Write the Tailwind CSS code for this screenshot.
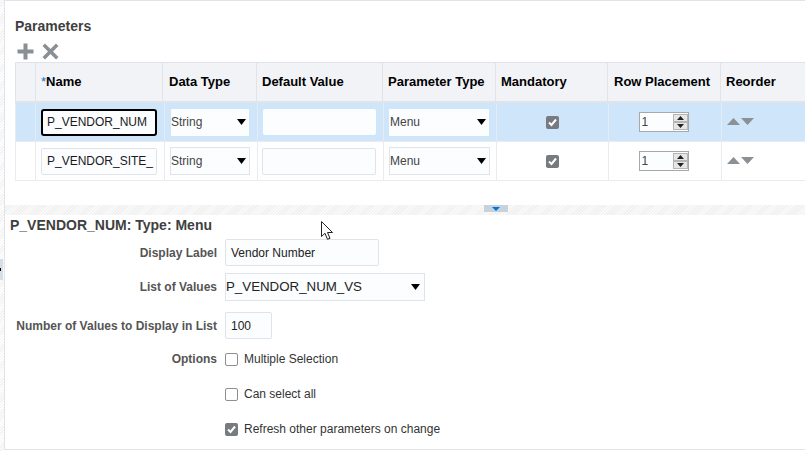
<!DOCTYPE html>
<html lang="en">
  <head>
    <meta charset="UTF-8" />
    <meta name="viewport" content="width=device-width, initial-scale=1.0" />
    <title>Parameters</title>
    <script src="https://cdn.jsdelivr.net/npm/@tailwindcss/browser@4"></script>
  </head>
  <body class="relative h-[451px] w-[805px] overflow-hidden bg-white font-['Liberation_Sans',Arial,sans-serif] text-xs text-[#1a1a1a]">
    <!-- left hatch strip -->
    <div class="absolute left-0 top-0 h-full w-[4px] bg-[repeating-linear-gradient(135deg,#f2f2f2_0,#f2f2f2_1px,#ffffff_1px,#ffffff_2px)]"></div>
    <div class="absolute left-0 top-[259px] h-[21px] w-[3px] bg-[#d6dfe6]"></div>
    <div class="absolute left-0 top-[268px] h-[3px] w-[1px] bg-black"></div>

    <div class="ml-[4px] h-[450px] w-[801px] border-l border-t border-b border-[#dfe4ea]">
      <!-- parameters section -->
      <div class="h-[204px] pl-[10px]">
        <h2 class="pt-[17px] text-sm leading-[16px] font-bold text-[#3f3f3f]">Parameters</h2>
        <div class="ml-[2px] mt-[1px] flex h-[27px] items-center gap-[8px] pt-[5px]">
          <svg width="17" height="17" viewBox="0 0 17 17"><path d="M6.500 0.500h4v6h6v4h-6v6h-4v-6h-6v-4h6z" fill="#8a8f94" /></svg>
          <svg width="17" height="17" viewBox="0 0 17 17"><path d="M3 0.500l5.500 5.500 5.500-5.500 2.500 2.500-5.500 5.500 5.500 5.500-2.500 2.500-5.500-5.500-5.500 5.500-2.500-2.500 5.500-5.500-5.500-5.500z" fill="#8a8f94" /></svg>
        </div>

        <div class="w-[790px] border-t border-[#dfe4ea]">
          <!-- header -->
          <div class="grid h-[40px] grid-cols-[21px_127px_94px_126px_113px_112px_113px_84px] items-center border-b-2 border-[#dfe4ea] bg-[#f1f3f7] text-[13px] font-bold text-black">
            <div class="h-full border-x border-[#dfe4ea]"></div>
            <div class="flex h-full items-center border-r border-[#dfe4ea] pl-[5px]"><span class="font-normal text-[#0572ce]">*</span>Name</div>
            <div class="flex h-full items-center border-r border-[#dfe4ea] pl-[6px]">Data Type</div>
            <div class="flex h-full items-center border-r border-[#dfe4ea] pl-[5px]">Default Value</div>
            <div class="flex h-full items-center border-r border-[#dfe4ea] pl-[5px]">Parameter Type</div>
            <div class="flex h-full items-center border-r border-[#dfe4ea] pl-[5px]">Mandatory</div>
            <div class="flex h-full items-center border-r border-[#dfe4ea] pl-[6px]">Row Placement</div>
            <div class="flex h-full items-center pl-[5px]">Reorder</div>
          </div>

          <!-- row 1 -->
          <div class="grid h-[39px] grid-cols-[21px_129px_93px_126px_113px_112px_113px_83px] items-center border-b border-[#e9ebee] bg-[#cfe6fa]">
            <div class="h-full border-x border-[#e4edf5]"></div>
            <div class="flex h-full items-center border-r border-[#e4edf5] pl-[5px]">
              <input value="P_VENDOR_NUM" class="h-[27px] w-[116px] rounded-[3px] border-2 border-black bg-[#fbfdff] pl-[4px] text-xs outline-none" />
            </div>
            <div class="flex h-full items-center border-r border-[#e4edf5] pl-[6px]">
              <div class="flex h-[27px] w-[78px] items-center justify-between bg-[#fbfdff] pr-[3px] text-[#444]">String
                <svg width="9" height="6" viewBox="0 0 9 6"><path d="M0 0h9l-4.500 6z" fill="#000" /></svg>
              </div>
            </div>
            <div class="flex h-full items-center border-r border-[#e4edf5] pl-[5px]">
              <div class="h-[26px] w-[113px] rounded-[2px] bg-[#fbfdff]"></div>
            </div>
            <div class="flex h-full items-center border-r border-[#e4edf5] pl-[5px]">
              <div class="flex h-[27px] w-[100px] items-center justify-between bg-[#fbfdff] pl-[1px] pr-[3px] text-[#444]">Menu
                <svg width="9" height="6" viewBox="0 0 9 6"><path d="M0 0h9l-4.500 6z" fill="#000" /></svg>
              </div>
            </div>
            <div class="flex h-full items-center justify-center border-r border-[#e4edf5]">
              <div class="flex h-[13px] w-[13px] items-center justify-center rounded-[2px] bg-[#777b7f]">
                <svg width="11" height="11" viewBox="0 0 11 11"><path d="M2 5.500l2.500 2.500 4.500-5.500" fill="none" stroke="#fff" stroke-width="2" /></svg>
              </div>
            </div>
            <div class="flex h-full items-center justify-center border-r border-[#e4edf5] pr-[3px]">
              <div class="flex h-[20px] w-[50px] items-center border border-[#a8a8a8] bg-[#fbfdff] pl-[2px] text-[#444]">
                <span class="flex-1">1</span>
                <span class="flex h-[16px] w-[15px] flex-col justify-between bg-[#b5b5b5] p-[1px]">
                  <span class="flex h-[6px] items-center justify-center bg-[#e6e6e6]"><svg width="7" height="4" viewBox="0 0 7 4"><path d="M3.500 0l3.500 4h-7z" fill="#222" /></svg></span>
                  <span class="flex h-[6px] items-center justify-center bg-[#e6e6e6]"><svg width="7" height="4" viewBox="0 0 7 4"><path d="M0 0h7l-3.500 4z" fill="#222" /></svg></span>
                </span>
              </div>
            </div>
            <div class="flex h-full items-center gap-[1px] pb-[2px] pl-[5px]">
              <svg width="13" height="7" viewBox="0 0 13 7"><path d="M6.500 0l6.500 7h-13z" fill="#8b9094" /></svg>
              <svg width="13" height="7" viewBox="0 0 13 7"><path d="M0 0h13l-6.500 7z" fill="#8b9094" /></svg>
            </div>
          </div>

          <!-- row 2 -->
          <div class="grid h-[39px] grid-cols-[21px_129px_93px_126px_113px_112px_113px_83px] items-center border-b border-[#e9ebee] bg-white">
            <div class="h-full border-x border-[#e9ebee]"></div>
            <div class="flex h-full items-center border-r border-[#e9ebee] pl-[5px]">
              <input value="P_VENDOR_SITE_" class="h-[27px] w-[116px] rounded-[2px] border border-[#dfe4ea] bg-[#fbfdff] pl-[5px] text-xs outline-none" />
            </div>
            <div class="flex h-full items-center border-r border-[#e9ebee] pl-[5px]">
              <div class="flex h-[28px] w-[80px] items-center justify-between border border-[#dfe4ea] bg-[#fbfdff] pr-[3px] text-[#444]">String
                <svg width="9" height="6" viewBox="0 0 9 6"><path d="M0 0h9l-4.500 6z" fill="#000" /></svg>
              </div>
            </div>
            <div class="flex h-full items-center border-r border-[#e9ebee] pl-[4px]">
              <div class="h-[27px] w-[114px] rounded-[2px] border border-[#dfe4ea] bg-[#fbfdff]"></div>
            </div>
            <div class="flex h-full items-center border-r border-[#e9ebee] pl-[5px]">
              <div class="flex h-[28px] w-[101px] items-center justify-between border border-[#dfe4ea] bg-[#fbfdff] pr-[3px] text-[#444]">Menu
                <svg width="9" height="6" viewBox="0 0 9 6"><path d="M0 0h9l-4.500 6z" fill="#000" /></svg>
              </div>
            </div>
            <div class="flex h-full items-center justify-center border-r border-[#e9ebee]">
              <div class="flex h-[13px] w-[13px] items-center justify-center rounded-[2px] bg-[#777b7f]">
                <svg width="11" height="11" viewBox="0 0 11 11"><path d="M2 5.500l2.500 2.500 4.500-5.500" fill="none" stroke="#fff" stroke-width="2" /></svg>
              </div>
            </div>
            <div class="flex h-full items-center justify-center border-r border-[#e9ebee] pr-[3px]">
              <div class="flex h-[20px] w-[50px] items-center border border-[#a8a8a8] bg-[#fbfdff] pl-[2px] text-[#444]">
                <span class="flex-1">1</span>
                <span class="flex h-[16px] w-[15px] flex-col justify-between bg-[#b5b5b5] p-[1px]">
                  <span class="flex h-[6px] items-center justify-center bg-[#e6e6e6]"><svg width="7" height="4" viewBox="0 0 7 4"><path d="M3.500 0l3.500 4h-7z" fill="#222" /></svg></span>
                  <span class="flex h-[6px] items-center justify-center bg-[#e6e6e6]"><svg width="7" height="4" viewBox="0 0 7 4"><path d="M0 0h7l-3.500 4z" fill="#222" /></svg></span>
                </span>
              </div>
            </div>
            <div class="flex h-full items-center gap-[1px] pb-[2px] pl-[5px]">
              <svg width="13" height="7" viewBox="0 0 13 7"><path d="M6.500 0l6.500 7h-13z" fill="#8b9094" /></svg>
              <svg width="13" height="7" viewBox="0 0 13 7"><path d="M0 0h13l-6.500 7z" fill="#8b9094" /></svg>
            </div>
          </div>
        </div>
      </div>

      <!-- splitter -->
      <div class="flex h-[10px] pl-[479px] bg-[repeating-linear-gradient(135deg,#f0f0f0_0,#f0f0f0_1px,#fafafa_1px,#fafafa_2px)]">
        <div class="flex h-[7px] w-[24px] items-center justify-center bg-[#c6d2dd]">
          <svg width="8" height="4" viewBox="0 0 8 4"><path d="M0 0h8l-4 4z" fill="#0572ce" /></svg>
        </div>
      </div>

      <!-- detail section -->
      <div class="pl-[5px]">
        <h3 class="pt-[2px] text-sm leading-[16px] font-bold text-[#3f3f3f]">P_VENDOR_NUM: Type: Menu</h3>
        <div class="mt-[6px] grid grid-cols-[207px_1fr] items-center gap-x-[8px] font-bold text-[#555]">
          <div class="text-right">Display Label</div>
          <div class="flex h-[27px] w-[154px] items-center rounded-[2px] border border-[#dfe4ea] bg-[#fbfdff] pl-[5px] font-normal text-[#222]">Vendor Number</div>

          <div class="mt-[7px] text-right">List of Values</div>
          <div class="mt-[7px] flex h-[28px] w-[200px] items-center justify-between border border-[#dfe4ea] bg-[#fbfdff] pr-[4px] text-[13.300px] font-normal text-[#222]">P_VENDOR_NUM_VS
            <svg width="9" height="6" viewBox="0 0 9 6"><path d="M0 0h9l-4.500 6z" fill="#000" /></svg>
          </div>

          <div class="mt-[11px] text-right">Number of Values to Display in List</div>
          <div class="mt-[11px] flex h-[27px] w-[47px] items-center rounded-[2px] border border-[#dfe4ea] bg-[#fbfdff] pl-[5px] font-normal text-[#222]">100</div>

          <div class="mt-[12px] text-right">Options</div>
          <div class="mt-[12px] flex h-[14px] items-center gap-[6px] font-normal text-[#333]">
            <span class="h-[13px] w-[13px] rounded-[2px] border border-[#8f8f8f] bg-white"></span>Multiple Selection
          </div>

          <div></div>
          <div class="mt-[20px] flex h-[14px] items-center gap-[6px] font-normal text-[#333]">
            <span class="h-[13px] w-[13px] rounded-[2px] border border-[#8f8f8f] bg-white"></span>Can select all
          </div>

          <div></div>
          <div class="mt-[21px] flex h-[14px] items-center gap-[6px] font-normal text-[#333]">
            <span class="flex h-[13px] w-[13px] items-center justify-center rounded-[2px] bg-[#777b7f]">
              <svg width="11" height="11" viewBox="0 0 11 11"><path d="M2 5.500l2.500 2.500 4.500-5.500" fill="none" stroke="#fff" stroke-width="2" /></svg>
            </span>Refresh other parameters on change
          </div>
        </div>
      </div>
    </div>

    <!-- mouse cursor -->
    <svg class="absolute left-[321px] top-[221px]" width="13" height="20" viewBox="0 0 13 20">
      <path d="M0.500 0.500v15l3.500-3.200 2.500 6 2.500-1-2.500-5.800h5z" fill="#fff" stroke="#222" stroke-width="1" />
    </svg>
  </body>
</html>
